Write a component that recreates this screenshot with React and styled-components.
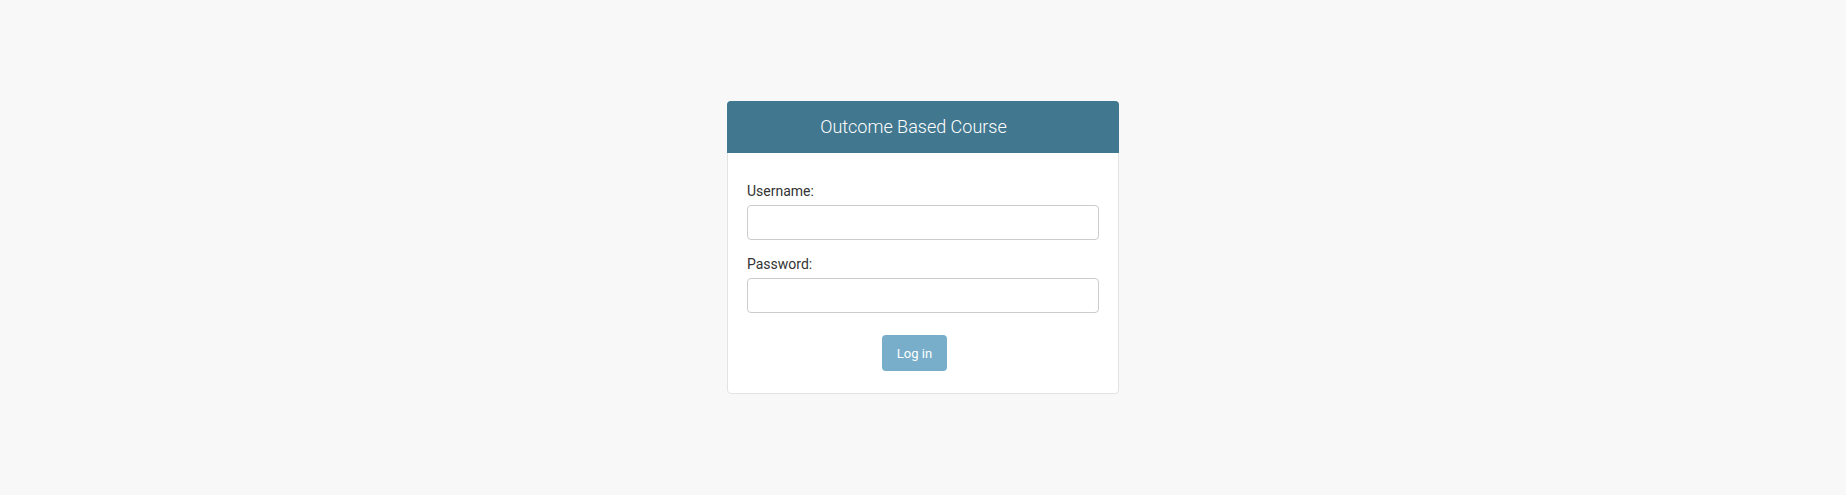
import styled, { createGlobalStyle } from "styled-components";

const GlobalStyle = createGlobalStyle`
  html, body {
    margin: 0;
    padding: 0;
    background: #f8f8f8;
    font-family: Roboto, "Liberation Sans", sans-serif;
  }
`;

const Page = styled.div`
  min-height: 495px;
  display: flex;
  justify-content: center;
  align-items: flex-start;
  padding-top: 101px;
  box-sizing: border-box;
`;

const Card = styled.div`
  width: 392px;
  box-sizing: border-box;
  background: #ffffff;
  border: 1px solid #e3e3e3;
  border-radius: 4px;
`;

const Header = styled.div`
  height: 52px;
  margin: -1px -1px 0;
  padding-right: 19px;
  background: #41778f;
  border-radius: 4px 4px 0 0;
  display: flex;
  align-items: center;
  justify-content: center;

  h1 {
    margin: 0;
    font-size: 18px;
    font-weight: 300;
    color: #ffffff;
    line-height: 1;
  }
`;

const Form = styled.form`
  display: flex;
  flex-direction: column;
  padding: 28px 19px 22px;
`;

const Field = styled.div`
  display: flex;
  flex-direction: column;
  margin-bottom: ${(p) => p.$gap || 14}px;
`;

const Label = styled.label`
  font-size: 14px;
  line-height: 20px;
  color: #333333;
  margin-bottom: ${(p) => p.$space || 4}px;
`;

const Input = styled.input`
  height: 35px;
  box-sizing: border-box;
  border: 1px solid #cccccc;
  border-radius: 4px;
  padding: 6px 12px;
  font-size: 14px;
  outline: none;
  background: #ffffff;
`;

const Actions = styled.div`
  display: flex;
  justify-content: center;
`;

const Button = styled.button`
  height: 36px;
  padding: 0 15px;
  margin-right: 17px;
  border: none;
  border-radius: 4px;
  background: #78aec9;
  color: #ffffff;
  font-family: Roboto, "Liberation Sans", sans-serif;
  font-size: 13px;
  cursor: pointer;
`;

export default function App() {
  return (
    <>
      <GlobalStyle />
      <Page>
        <Card>
          <Header>
            <h1>Outcome Based Course</h1>
          </Header>
          <Form onSubmit={(e) => e.preventDefault()}>
            <Field>
              <Label htmlFor="username">Username:</Label>
              <Input id="username" type="text" />
            </Field>
            <Field $gap={22}>
              <Label htmlFor="password" $space={4}>Password:</Label>
              <Input id="password" type="password" />
            </Field>
            <Actions>
              <Button type="submit">Log in</Button>
            </Actions>
          </Form>
        </Card>
      </Page>
    </>
  );
}
